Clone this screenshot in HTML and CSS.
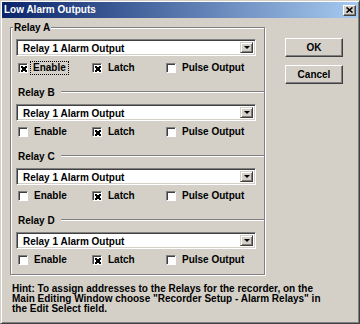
FILE: index.html
```html
<!DOCTYPE html>
<html lang="en">
<head>
    <meta charset="UTF-8">
    <meta name="viewport" content="width=device-width, initial-scale=1.0">
    <title>Low Alarm Outputs</title>
    <link rel="stylesheet" href="styles.css">
</head>
<body>
    <div class="window">
        <div class="titlebar">
            <span class="title">Low Alarm Outputs</span>
            <span class="close">
                <svg width="7" height="6" viewBox="0 0 7 6"><path d="M0.5 0.5 L6.5 5.5 M6.5 0.5 L0.5 5.5" stroke="#000" stroke-width="1.6"/></svg>
            </span>
        </div>
        <div class="content">
            <div class="main">
                <fieldset class="relays">
                    <legend>Relay A</legend>
                    <div class="relay relay_first">
                        <div class="combo"><span class="value">Relay 1 Alarm Output</span><span class="drop"><i></i></span></div>
                        <div class="checks">
                            <label class="check"><span class="box on"></span><span class="text focus">Enable</span></label>
                            <label class="check"><span class="box on"></span><span class="text">Latch</span></label>
                            <label class="check"><span class="box"></span><span class="text">Pulse Output</span></label>
                        </div>
                    </div>
                    <div class="relay">
                        <div class="relay_head"><span>Relay B</span></div>
                        <div class="combo"><span class="value">Relay 1 Alarm Output</span><span class="drop"><i></i></span></div>
                        <div class="checks">
                            <label class="check"><span class="box"></span><span class="text">Enable</span></label>
                            <label class="check"><span class="box on"></span><span class="text">Latch</span></label>
                            <label class="check"><span class="box"></span><span class="text">Pulse Output</span></label>
                        </div>
                    </div>
                    <div class="relay">
                        <div class="relay_head"><span>Relay C</span></div>
                        <div class="combo"><span class="value">Relay 1 Alarm Output</span><span class="drop"><i></i></span></div>
                        <div class="checks">
                            <label class="check"><span class="box"></span><span class="text">Enable</span></label>
                            <label class="check"><span class="box on"></span><span class="text">Latch</span></label>
                            <label class="check"><span class="box"></span><span class="text">Pulse Output</span></label>
                        </div>
                    </div>
                    <div class="relay">
                        <div class="relay_head"><span>Relay D</span></div>
                        <div class="combo"><span class="value">Relay 1 Alarm Output</span><span class="drop"><i></i></span></div>
                        <div class="checks">
                            <label class="check"><span class="box"></span><span class="text">Enable</span></label>
                            <label class="check"><span class="box on"></span><span class="text">Latch</span></label>
                            <label class="check"><span class="box"></span><span class="text">Pulse Output</span></label>
                        </div>
                    </div>
                </fieldset>
                <div class="buttons">
                    <button class="btn">OK</button>
                    <button class="btn">Cancel</button>
                </div>
            </div>
            <p class="hint">Hint: To assign addresses to the Relays for the recorder, on the<br>Main Editing Window choose "Recorder Setup - Alarm Relays" in<br>the Edit Select field.</p>
        </div>
    </div>
</body>
</html>
```

FILE: styles.css
```css
* {
    box-sizing: border-box;
}

body {
    margin: 0;
    background: #d4d0c8;
    font-family: "Liberation Sans", Arial, sans-serif;
    font-size: 10px;
    font-weight: bold;
    color: #000;
}

.window {
    width: 360px;
    height: 324px;
    padding: 1px;
    background: #d4d0c8;
    border: 1px solid;
    border-color: #d4d0c8 #404040 #404040 #d4d0c8;
    box-shadow: inset 1px 1px #fff, inset -1px -1px #808080;
}

.titlebar {
    height: 16px;
    display: flex;
    align-items: center;
    justify-content: space-between;
    padding: 0 2px 0 2px;
    background: linear-gradient(to right, #0a246a, #a6caf0);
}

.title {
    color: #fff;
    line-height: 12px;
}

.close {
    width: 13px;
    height: 11px;
    display: flex;
    align-items: center;
    justify-content: center;
    background: #d4d0c8;
    border: 1px solid;
    border-color: #fff #404040 #404040 #fff;
    box-shadow: inset -1px -1px #808080;
}

.content {
    padding: 4px 0 0 8px;
}

.main {
    display: flex;
    align-items: flex-start;
}

/* group box */
.relays {
    width: 255px;
    margin: 0;
    padding: 0 0 8px 0;
    border: 1px solid #808080;
    box-shadow: inset 1px 1px #fff, 1px 1px #fff;
}

.relays legend {
    margin-left: 2px;
    padding: 0 1px;
    line-height: 11px;
    background: #d4d0c8;
}

.relay {
    padding: 0 8px 0 5px;
}

.relay_head {
    display: flex;
    align-items: center;
    height: 12px;
    margin: 12px -8px 6px 0;
    padding-left: 2px;
}

.relay_head::after {
    content: "";
    flex: 1;
    margin-left: 6px;
    border-top: 1px solid #808080;
    border-bottom: 1px solid #fff;
}

.relay_first .combo {
    margin-top: 6px;
}

.combo {
    height: 17px;
    display: flex;
    background: #fff;
    border: 1px solid;
    border-color: #808080 #fff #fff #808080;
    box-shadow: inset 1px 1px #404040, inset -1px -1px #d4d0c8;
    padding: 2px;
}

.combo .value {
    flex: 1;
    padding-left: 4px;
    line-height: 13px;
}

.drop {
    width: 13px;
    display: flex;
    align-items: center;
    justify-content: center;
    background: #d4d0c8;
    border: 1px solid;
    border-color: #d4d0c8 #404040 #404040 #d4d0c8;
    box-shadow: inset 1px 1px #fff, inset -1px -1px #808080;
}

.drop i {
    width: 0;
    height: 0;
    border-left: 3px solid transparent;
    border-right: 3px solid transparent;
    border-top: 3px solid #000;
}

.checks {
    display: grid;
    grid-template-columns: 74px 74px auto;
    height: 12px;
    margin: 5px 0 0 2px;
}

.relay_first .checks {
    margin-top: 6px;
}

.check {
    display: flex;
    align-items: center;
}

.box {
    width: 10px;
    height: 10px;
    margin-right: 5px;
    background: #fff;
    border: 1px solid;
    border-color: #808080 #fff #fff #808080;
    box-shadow: inset 1px 1px #404040;
    display: flex;
    align-items: center;
    justify-content: center;
}

.box.on::after {
    content: "";
    width: 6px;
    height: 6px;
    margin: 1px 0 0 1px;
    background:
        linear-gradient(45deg, transparent 34%, #000 34%, #000 66%, transparent 66%),
        linear-gradient(-45deg, transparent 34%, #000 34%, #000 66%, transparent 66%);
}

.text {
    line-height: 12px;
    padding: 0 1px;
}

.text.focus {
    outline: 1px dotted #000;
    margin-left: -2px;
    padding: 0 2px 0 2px;
}

.buttons {
    display: flex;
    flex-direction: column;
    gap: 8px;
    margin: 16px 0 0 20px;
}

.btn {
    width: 58px;
    height: 19px;
    padding: 0;
    font: inherit;
    color: #000;
    background: #d4d0c8;
    border: 1px solid;
    border-color: #fff #404040 #404040 #fff;
    box-shadow: inset -1px -1px #808080;
}

.hint {
    margin: 9px 0 0 2px;
    line-height: 10px;
}
```
